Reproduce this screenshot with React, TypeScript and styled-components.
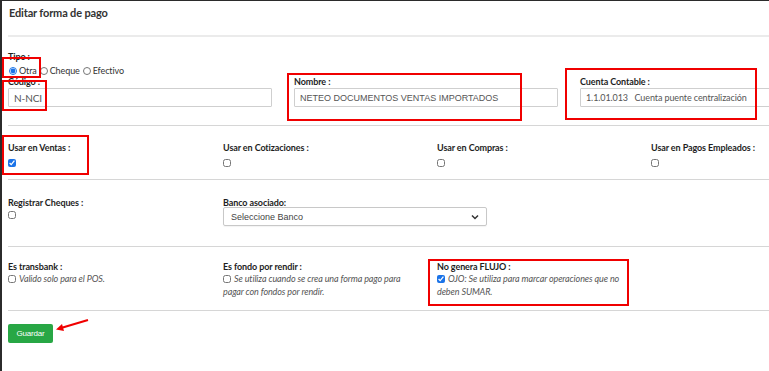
import React from 'react';
import styled, { createGlobalStyle } from 'styled-components';

const GlobalStyle = createGlobalStyle`
  html, body {
    margin: 0;
    padding: 0;
    background: #ffffff;
    overflow: hidden;
  }
  body {
    font-family: Lato, 'Liberation Sans', sans-serif;
    color: #333333;
  }
`;

const Frame = styled.div`
  position: relative;
  width: 767px;
  height: 370px;
  border-top: 1px solid #2b2b2b;
  border-left: 2px solid #2b2b2b;
  overflow: hidden;
  background: #ffffff;
`;

const Inner = styled.div`
  width: 880px;
  padding-left: 6px;
`;

const Title = styled.h1`
  margin: 0;
  padding: 5px 0 0 1px;
  height: 29px;
  font-size: 11px;
  line-height: 14px;
  font-weight: 700;
  letter-spacing: -0.15px;
  color: #333;
`;

const Divider = styled.div<{ $thick?: boolean }>`
  height: ${(p) => (p.$thick ? '2px' : '1px')};
  background: ${(p) => (p.$thick ? '#ebebeb' : '#d6d6d6')};
`;

const Section = styled.div<{ $h: number; $cols: string; $top: number }>`
  height: ${(p) => p.$h}px;
  box-sizing: border-box;
  padding-top: ${(p) => p.$top}px;
  display: grid;
  grid-template-columns: ${(p) => p.$cols};
  align-items: start;
`;

const Field = styled.div<{ $offset?: number }>`
  display: flex;
  flex-direction: column;
  padding-right: 22px;
  padding-top: ${(p) => p.$offset || 0}px;
`;

const Label = styled.label`
  display: block;
  font-size: 9px;
  line-height: 11px;
  font-weight: 700;
  color: #1e1e1e;
  letter-spacing: -0.1px;
  white-space: nowrap;
`;

const RadioRow = styled.div`
  display: flex;
  align-items: center;
  height: 11px;
  margin-top: 3px;
  font-size: 9px;
  color: #333;
`;

const Radio = styled.input.attrs({ type: 'radio' })`
  width: 8px;
  height: 8px;
  margin: 1px 2px 0 1px;
  accent-color: #1a73e8;
`;

const RadioText = styled.span`
  margin-right: 2px;
  letter-spacing: -0.1px;
`;

const TextInput = styled.input<{ $font?: string; $size?: number }>`
  box-sizing: border-box;
  width: 100%;
  height: 19px;
  margin-top: 1px;
  padding: 0 5px;
  border: 1px solid #cfcfcf;
  border-radius: 1px;
  font-family: ${(p) => p.$font || "'Liberation Sans', Arial, sans-serif"};
  font-size: ${(p) => p.$size || 9}px;
  letter-spacing: ${(p) => (p.$font ? '-0.1px' : '0')};
  color: #555;
  background: #fff;
  outline: none;
`;

const SelectBox = styled.div`
  box-sizing: border-box;
  width: 264px;
  height: 19px;
  margin-top: -1px;
  padding: 0 7px;
  border: 1px solid #c8c8c8;
  border-radius: 2px;
  display: flex;
  align-items: center;
  justify-content: space-between;
  font-family: 'Liberation Sans', Arial, sans-serif;
  font-size: 9px;
  color: #444;
  box-shadow: 0 1px 1px rgba(0, 0, 0, 0.05);
`;

const Check = styled.input.attrs({ type: 'checkbox' })`
  width: 8px;
  height: 8px;
  margin: 0 3px 0 0;
  flex: none;
  accent-color: #1a73e8;
`;

const CheckLine = styled.div<{ $gap?: number }>`
  margin-top: ${(p) => p.$gap || 0}px;
  font-size: 9px;
  line-height: 13px;
  font-style: italic;
  color: #555;
  letter-spacing: -0.1px;

  input {
    vertical-align: -1px;
  }
`;

const SaveButton = styled.button`
  margin: 13px 0 0 0;
  width: 45px;
  height: 19px;
  padding: 0;
  border: none;
  border-radius: 2px;
  background: #28a745;
  color: #fff;
  font-family: 'Liberation Sans', Arial, sans-serif;
  font-size: 8px;
  letter-spacing: -0.2px;
`;

const Mark = styled.div<{ $x: number; $y: number; $w: number; $h: number }>`
  position: absolute;
  left: ${(p) => p.$x - 2}px;
  top: ${(p) => p.$y - 1}px;
  width: ${(p) => p.$w}px;
  height: ${(p) => p.$h}px;
  box-sizing: border-box;
  border: 2px solid #f00000;
  pointer-events: none;
`;

const Arrow = styled.svg`
  position: absolute;
  left: 50px;
  top: 314px;
  overflow: visible;
`;

const Chevron = () => (
  <svg width="8" height="6" viewBox="0 0 8 6">
    <path d="M1 1.5 L4 4.5 L7 1.5" fill="none" stroke="#333" strokeWidth="1.5" />
  </svg>
);

export default function App() {
  return (
    <>
      <GlobalStyle />
      <Frame>
        <Inner>
          <Title>Editar forma de pago</Title>
          <Divider $thick />

          <Section $h={88} $cols="286px 286px 286px" $top={14}>
            <Field>
              <Label>Tipo :</Label>
              <RadioRow>
                <Radio name="tipo" defaultChecked />
                <RadioText>Otra</RadioText>
                <Radio name="tipo" />
                <RadioText>Cheque</RadioText>
                <Radio name="tipo" />
                <RadioText>Efectivo</RadioText>
              </RadioRow>
              <Label>Código :</Label>
              <TextInput $font="Lato, sans-serif" $size={10} defaultValue="N-NCI" />
            </Field>
            <Field $offset={25}>
              <Label>Nombre :</Label>
              <TextInput defaultValue="NETEO DOCUMENTOS VENTAS IMPORTADOS" />
            </Field>
            <Field $offset={25}>
              <Label>Cuenta Contable :</Label>
              <TextInput $font="Lato, sans-serif" defaultValue="1.1.01.013   Cuenta puente centralización" />
            </Field>
          </Section>
          <Divider />

          <Section $h={53} $cols="215px 214px 214px 214px" $top={16}>
            <Field>
              <Label>Usar en Ventas :</Label>
              <CheckLine $gap={3}><Check defaultChecked /></CheckLine>
            </Field>
            <Field>
              <Label>Usar en Cotizaciones :</Label>
              <CheckLine $gap={3}><Check /></CheckLine>
            </Field>
            <Field>
              <Label>Usar en Compras :</Label>
              <CheckLine $gap={3}><Check /></CheckLine>
            </Field>
            <Field>
              <Label>Usar en Pagos Empleados :</Label>
              <CheckLine $gap={3}><Check /></CheckLine>
            </Field>
          </Section>
          <Divider />

          <Section $h={66} $cols="215px 300px" $top={17}>
            <Field>
              <Label>Registrar Cheques :</Label>
              <CheckLine><Check /></CheckLine>
            </Field>
            <Field>
              <Label>Banco asociado:</Label>
              <SelectBox>
                <span>Seleccione Banco</span>
                <Chevron />
              </SelectBox>
            </Field>
          </Section>
          <Divider />

          <Section $h={63} $cols="215px 214px 214px" $top={14}>
            <Field>
              <Label>Es transbank :</Label>
              <CheckLine><Check />Valido solo para el POS.</CheckLine>
            </Field>
            <Field>
              <Label>Es fondo por rendir :</Label>
              <CheckLine><Check />Se utiliza cuando se crea una forma pago para pagar con fondos por rendir.</CheckLine>
            </Field>
            <Field>
              <Label>No genera FLUJO :</Label>
              <CheckLine><Check defaultChecked />OJO: Se utiliza para marcar operaciones que no deben SUMAR.</CheckLine>
            </Field>
          </Section>
          <Divider />

          <SaveButton>Guardar</SaveButton>
        </Inner>

        <Mark $x={2} $y={57} $w={39} $h={21} />
        <Mark $x={2} $y={80} $w={45} $h={31} />
        <Mark $x={287} $y={73} $w={235} $h={48} />
        <Mark $x={565} $y={68} $w={192} $h={52} />
        <Mark $x={2} $y={135} $w={87} $h={40} />
        <Mark $x={428} $y={259} $w={201} $h={47} />

        <Arrow width="40" height="20">
          <line x1="36" y1="5" x2="9" y2="13" stroke="#f00000" strokeWidth="2" />
          <polygon points="4,14.5 10,9 12,16" fill="#f00000" />
        </Arrow>
      </Frame>
    </>
  );
}
